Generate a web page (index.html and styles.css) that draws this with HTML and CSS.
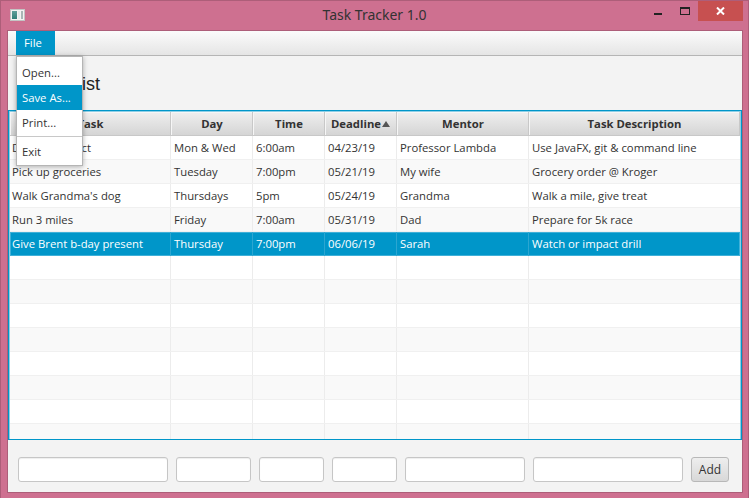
FILE: index.html
```html
<!DOCTYPE html>
<html lang="en">
<head>
    <meta charset="UTF-8">
    <title>Task Tracker 1.0</title>
    <link rel="stylesheet" href="styles.css">
</head>
<body>
    <div class="titlebar">
        <div class="app-icon"><span class="icon-a"></span><span class="icon-b"></span><span class="icon-c"></span></div>
        <div class="title">Task Tracker 1.0</div>
        <div class="window-buttons">
            <div class="win-btn min"><span class="min-glyph"></span></div>
            <div class="win-btn max"><span class="max-glyph"></span></div>
            <div class="win-btn close">
                <svg width="9" height="8" viewBox="0 0 9 8"><path d="M1 0.5 L8 7.5 M8 0.5 L1 7.5" stroke="#fff" stroke-width="2" fill="none"/></svg>
            </div>
        </div>
    </div>

    <div class="client">
        <div class="menubar">
            <div class="menu-item active">File</div>
        </div>

        <div class="dropdown">
            <div class="drop-item">Open...</div>
            <div class="drop-item selected">Save As...</div>
            <div class="drop-item">Print...</div>
            <div class="drop-sep"></div>
            <div class="drop-item">Exit</div>
        </div>

        <div class="heading">Task List</div>

        <div class="table">
            <div class="row head">
                <div class="cell">Task</div>
                <div class="cell">Day</div>
                <div class="cell">Time</div>
                <div class="cell sorted">Deadline<span class="sort-arrow"></span></div>
                <div class="cell">Mentor</div>
                <div class="cell">Task Description</div>
            </div>
            <div class="row">
                <div class="cell">Do Java project</div><div class="cell">Mon &amp; Wed</div><div class="cell">6:00am</div><div class="cell">04/23/19</div><div class="cell">Professor Lambda</div><div class="cell">Use JavaFX, git &amp; command line</div>
            </div>
            <div class="row odd">
                <div class="cell">Pick up groceries</div><div class="cell">Tuesday</div><div class="cell">7:00pm</div><div class="cell">05/21/19</div><div class="cell">My wife</div><div class="cell">Grocery order @ Kroger</div>
            </div>
            <div class="row">
                <div class="cell">Walk Grandma's dog</div><div class="cell">Thursdays</div><div class="cell">5pm</div><div class="cell">05/24/19</div><div class="cell">Grandma</div><div class="cell">Walk a mile, give treat</div>
            </div>
            <div class="row odd">
                <div class="cell">Run 3 miles</div><div class="cell">Friday</div><div class="cell">7:00am</div><div class="cell">05/31/19</div><div class="cell">Dad</div><div class="cell">Prepare for 5k race</div>
            </div>
            <div class="row picked">
                <div class="cell">Give Brent b-day present</div><div class="cell">Thursday</div><div class="cell">7:00pm</div><div class="cell">06/06/19</div><div class="cell">Sarah</div><div class="cell">Watch or impact drill</div>
            </div>
            <div class="row"><div class="cell"></div><div class="cell"></div><div class="cell"></div><div class="cell"></div><div class="cell"></div><div class="cell"></div></div>
            <div class="row odd"><div class="cell"></div><div class="cell"></div><div class="cell"></div><div class="cell"></div><div class="cell"></div><div class="cell"></div></div>
            <div class="row"><div class="cell"></div><div class="cell"></div><div class="cell"></div><div class="cell"></div><div class="cell"></div><div class="cell"></div></div>
            <div class="row odd"><div class="cell"></div><div class="cell"></div><div class="cell"></div><div class="cell"></div><div class="cell"></div><div class="cell"></div></div>
            <div class="row"><div class="cell"></div><div class="cell"></div><div class="cell"></div><div class="cell"></div><div class="cell"></div><div class="cell"></div></div>
            <div class="row odd"><div class="cell"></div><div class="cell"></div><div class="cell"></div><div class="cell"></div><div class="cell"></div><div class="cell"></div></div>
            <div class="row"><div class="cell"></div><div class="cell"></div><div class="cell"></div><div class="cell"></div><div class="cell"></div><div class="cell"></div></div>
            <div class="row odd"><div class="cell"></div><div class="cell"></div><div class="cell"></div><div class="cell"></div><div class="cell"></div><div class="cell"></div></div>
        </div>

        <div class="add-bar">
            <input class="field w-task" type="text">
            <input class="field w-day" type="text">
            <input class="field w-short" type="text">
            <input class="field w-short" type="text">
            <input class="field w-mentor" type="text">
            <input class="field w-desc" type="text">
            <button class="add-btn">Add</button>
        </div>
    </div>
</body>
</html>
```

FILE: styles.css
```css
* {
    box-sizing: border-box;
}

body {
    margin: 0;
    height: 498px;
    overflow: hidden;
    display: flex;
    flex-direction: column;
    background-color: #ce7090;
    border: 1px solid #ad5e79;
    border-bottom: 0;
    font-family: "Open Sans", "Noto Sans", sans-serif;
    font-size: 11.3px;
    color: #333;
}

.titlebar {
    height: 30px;
    display: flex;
    align-items: flex-start;
    flex-shrink: 0;
    position: relative;
}

.app-icon {
    width: 15px;
    height: 12px;
    margin: 8px 0 0 9px;
    display: flex;
    border: 1px solid #c4c4c4;
    background-color: #f2f2f2;
    padding: 1px;
    gap: 1px;
}

.icon-a {
    width: 6px;
    background: linear-gradient(#5f9e9a, #2f7f78);
}

.icon-b {
    width: 2px;
    background-color: #e4eaea;
}

.icon-c {
    width: 2px;
    background-color: #a9b6b6;
}

.title {
    position: absolute;
    left: 0;
    right: 0;
    top: 4px;
    text-align: center;
    font-family: "Noto Sans", sans-serif;
    font-size: 14px;
    line-height: 20px;
    color: #333;
}

.window-buttons {
    margin-left: auto;
    margin-right: 5px;
    display: flex;
    position: relative;
}

.win-btn {
    height: 20px;
    display: flex;
    align-items: center;
    justify-content: center;
}

.win-btn.min {
    width: 28px;
}

.win-btn.max {
    width: 26px;
}

.win-btn.close {
    width: 45px;
    background-color: #c75050;
}

.min-glyph {
    width: 8px;
    height: 2px;
    background-color: #222;
    margin-top: 6px;
}

.max-glyph {
    width: 10px;
    height: 8px;
    border: 1px solid #222;
    border-top-width: 2px;
}

.client {
    flex: 1;
    margin: 0 6px 6px 7px;
    position: relative;
    display: flex;
    flex-direction: column;
    background-color: #f3f3f3;
    box-shadow: 0 0 0 1px #ad5e79;
}

.menubar {
    height: 25px;
    padding-left: 8px;
    display: flex;
    flex-shrink: 0;
    background: linear-gradient(#fbfbfb, #e5e5e5);
    border-bottom: 1px solid #b5b5b5;
}

.menu-item {
    width: 39px;
    padding-left: 8px;
    line-height: 24px;
    height: 24px;
}

.menu-item.active {
    background-color: #0096c9;
    color: #fff;
}

.dropdown {
    position: absolute;
    left: 8px;
    top: 25px;
    width: 67px;
    z-index: 5;
    padding: 3px 0 1px;
    background-color: #fff;
    border: 1px solid #b5b5b5;
    box-shadow: 0 1px 5px rgba(0, 0, 0, 0.3);
}

.drop-item {
    height: 25px;
    line-height: 25px;
    padding-left: 5px;
}

.drop-item.selected {
    background-color: #0096c9;
    color: #fff;
}

.drop-sep {
    height: 1px;
    margin-top: 1px;
    margin-bottom: 2px;
    background-color: #c8c8c8;
}

.heading {
    height: 54px;
    padding: 17px 0 0 22px;
    flex-shrink: 0;
    font-family: "Liberation Sans", Arial, sans-serif;
    font-size: 18px;
    line-height: 22px;
    color: #222;
}

.table {
    height: 330px;
    flex-shrink: 0;
    background-color: #fff;
    border: 1px solid #0096c9;
    box-shadow: inset 0 0 0 1px #8fcfe6;
    padding: 1px;
    overflow: hidden;
}

.row {
    display: grid;
    grid-template-columns: 161px 82px 72px 72px 132px 1fr;
    height: 24px;
    background-color: #fff;
    border-bottom: 1px solid #f0f0f0;
}

.row.odd {
    background-color: #f9f9f9;
}

.cell {
    padding-left: 3px;
    line-height: 23px;
    white-space: nowrap;
    overflow: hidden;
    border-right: 1px solid #ececec;
}

.cell:first-child {
    padding-left: 2px;
}

.cell:last-child {
    border-right: 0;
}

.row.head {
    background: linear-gradient(#efefef, #d5d5d5);
    border-bottom: 1px solid #c8c8c8;
    font-weight: 700;
}

.row.head .cell {
    padding-left: 1px;
    text-align: center;
    border-right: 1px solid #c8c8c8;
    box-shadow: inset 1px 1px 0 #f6f6f6;
}

.row.head .sorted {
    padding-left: 0;
    display: flex;
    align-items: center;
    justify-content: center;
}

.sort-arrow {
    width: 0;
    height: 0;
    margin-left: 1px;
    border-left: 4px solid transparent;
    border-right: 4px solid transparent;
    border-bottom: 6px solid #555;
}

.row.picked {
    background-color: #0096c9;
    color: #fff;
    border-bottom: 0;
    box-shadow: inset 0 0 0 1px #3fb0d8;
}

.row.picked .cell {
    border-right-color: #2ba6d1;
}

.add-bar {
    flex: 1;
    display: flex;
    align-items: center;
    gap: 8px;
    padding: 7px 13px 0 10px;
}

.field {
    height: 25px;
    margin: 0;
    padding: 0 6px;
    background-color: #fff;
    border: 1px solid #c6c6c6;
    border-radius: 3px;
    box-shadow: inset 0 1px 1px #eee;
    font: inherit;
}

.w-task {
    width: 150px;
}

.w-day {
    width: 75px;
}

.w-short {
    width: 65px;
}

.w-mentor {
    width: 120px;
}

.w-desc {
    width: 150px;
}

.add-btn {
    width: 38px;
    height: 25px;
    margin: 0;
    padding: 0;
    background: linear-gradient(#eee, #d8d8d8);
    border: 1px solid #b8b8b8;
    border-radius: 3px;
    font: inherit;
    font-size: 12px;
    color: #333;
}
```
